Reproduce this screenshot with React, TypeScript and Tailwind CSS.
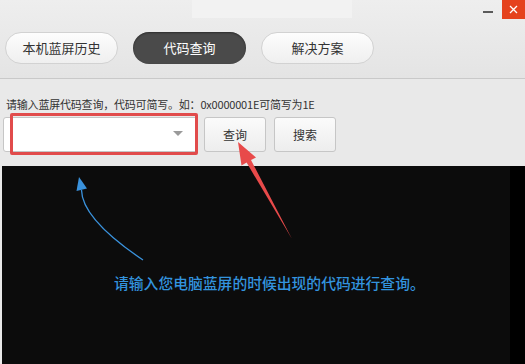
const cjk = { fontFamily: '"Noto Sans CJK SC", "Microsoft YaHei", sans-serif' };

const tabs = [
  { label: "本机蓝屏历史", active: false },
  { label: "代码查询", active: true },
  { label: "解决方案", active: false },
];

function Tab({ label, active }: { label: string; active: boolean }) {
  return (
    <div
      className={
        active
          ? "flex h-[32px] w-[113px] items-center justify-center rounded-full bg-[#4a4a4a] text-[13px] text-white shadow-[inset_0_1px_2px_rgba(0,0,0,0.4)]"
          : "flex h-[32px] w-[113px] items-center justify-center rounded-full border border-[#d2d2d2] bg-gradient-to-b from-[#fdfdfd] to-[#efefef] text-[13px] text-[#333]"
      }
    >
      {label}
    </div>
  );
}

function Annotations() {
  return (
    <svg
      className="pointer-events-none absolute left-0 top-0"
      width="525"
      height="364"
      viewBox="0 0 525 364"
    >
      {/* red arrow pointing at the query button */}
      <polygon
        points="238,142 241.5,165.5 246.6,162.6 292,239 251,160 256,157.5"
        fill="#e84a4a"
      />
      {/* blue curved arrow */}
      <path d="M143 260 Q82 219 81.5 190" fill="none" stroke="#3a92dc" strokeWidth="1.3" />
      <polygon points="79,177 76.5,191 87,188.5" fill="#3a92dc" />
    </svg>
  );
}

export default function App() {
  return (
    <div className="relative h-[364px] w-[525px] overflow-hidden bg-[#e9e9e9]" style={cjk}>
      <div className="flex h-[79px] flex-col border-b border-[#c9c9c9] bg-gradient-to-b from-[#eeeeee] to-[#e4e4e4]">
        <div className="flex h-[19px] items-start">
          <div className="ml-[192px] h-[18px] w-[160px] bg-[#f2f2f2]" />
          <div className="ml-auto mr-[9px] mt-[11px] h-[2px] w-[10px] bg-[#5a5a5a]" />
          <div className="flex h-[19px] w-[23px] items-center justify-center bg-[#e5421d]">
            <svg width="9" height="9" viewBox="0 0 9 9">
              <path d="M1 1 L8 8 M8 1 L1 8" stroke="#fff" strokeWidth="1.3" />
            </svg>
          </div>
        </div>
        <div className="mt-[13px] flex gap-[15px] pl-[5px]">
          {tabs.map((t) => (
            <Tab key={t.label} label={t.label} active={t.active} />
          ))}
        </div>
      </div>

      <div className="flex flex-col">
        <p className="ml-[6px] mt-[17px] text-[11px] leading-[16px] tracking-[-0.2px] text-[#333]">
          请输入蓝屏代码查询，代码可简写。如：0x0000001E可简写为1E
        </p>
        <div className="mt-[5px] flex h-[35px] items-stretch pl-[3px]">
          <div className="relative w-[195px] rounded-[3px] border border-[#c6c6c6] bg-white">
            <div className="absolute right-[14px] top-[13px] h-0 w-0 border-x-[5px] border-t-[5px] border-x-transparent border-t-[#9a9a9a]" />
            <div className="absolute -top-[5px] bottom-[-4px] left-[6px] right-[-1px] rounded-[2px] border-[3px] border-[#e14b4b]" />
          </div>
          <button className="ml-[6px] w-[62px] rounded-[3px] border border-[#c6c6c6] bg-gradient-to-b from-[#fbfbfb] to-[#ededed] text-[12px] text-[#333]">
            查询
          </button>
          <button className="ml-[8px] w-[62px] rounded-[3px] border border-[#c6c6c6] bg-gradient-to-b from-[#fbfbfb] to-[#ededed] text-[12px] text-[#333]">
            搜索
          </button>
        </div>
        <div className="mt-[14px] flex h-[198px] pl-[2px]">
          <div className="flex-1 bg-[#0c0c0c] pl-[112px] pt-[107px]">
            <p className="text-[14.8px] font-medium leading-[20px] text-[#3393de]">
              请输入您电脑蓝屏的时候出现的代码进行查询。
            </p>
          </div>
          <div className="w-[15px] bg-black" />
        </div>
      </div>

      <Annotations />
    </div>
  );
}
